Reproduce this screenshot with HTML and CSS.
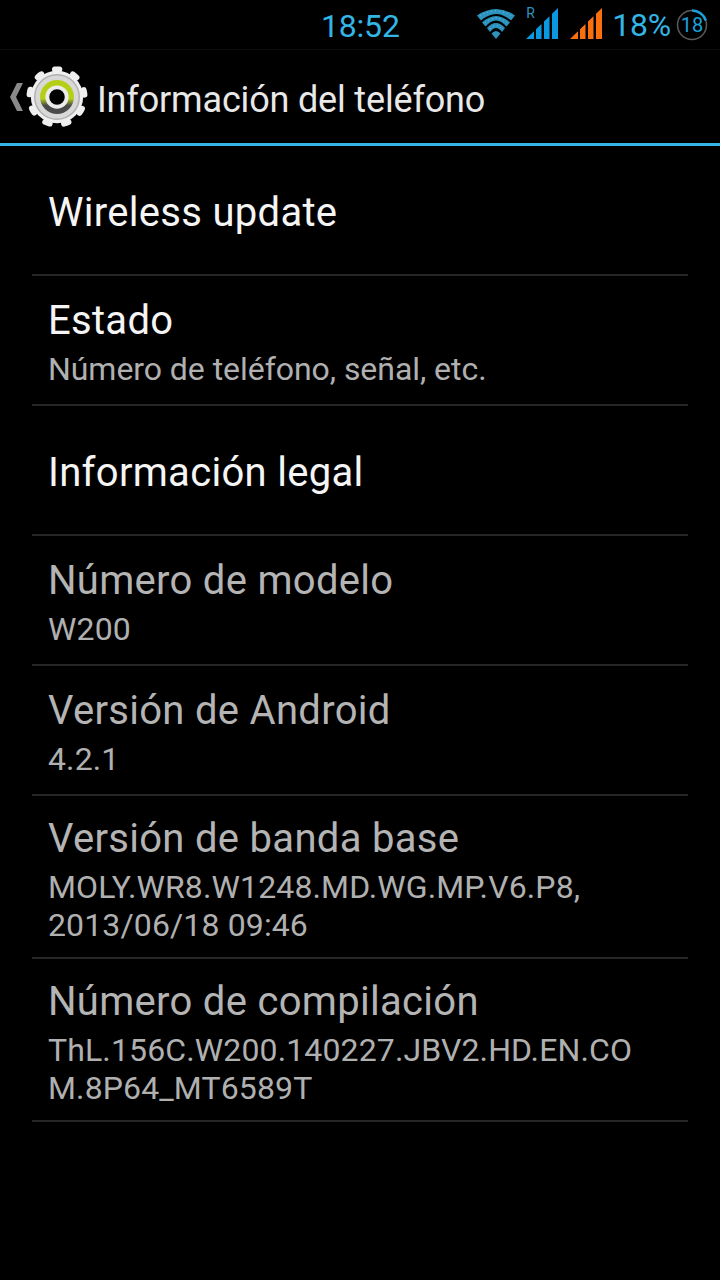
FILE: index.html
```html
<!DOCTYPE html>
<html>
<head>
    <title>Información del teléfono</title>
    <link rel="stylesheet" href="styles.css">
</head>
<body>
    <div class="status-bar">
        <span class="clock">18:52</span>
        <div class="status-icons">
            <!-- wifi -->
            <svg class="wifi" width="40" height="32" viewBox="0 0 40 32">
                <path d="M1 7.500Q20 -5.500 39 7.500L35 12.500Q20 -0.500 5 12.500Z" fill="#2b93bd"/>
                <path d="M6 14.500Q20 1.500 34 14.500L30.500 18.500Q20 6.500 9.500 18.500Z" fill="#2b93bd"/>
                <path d="M11 20Q20 10 29 20L26 24Q20 16 14 24Z" fill="#2b93bd"/>
                <path d="M15.500 25.500Q20 20.500 24.500 25.500L20 31Z" fill="#2b93bd"/>
                <path d="M4 8Q20 -2 36 8M9 15Q20 5 31 15M14 21Q20 14 26 21" fill="none" stroke="#7cc0da" stroke-width="1" stroke-dasharray="1 3"/>
            </svg>
            <div class="signal-wrap">
                <span class="roam">R</span>
                <svg class="signal" width="32" height="32" viewBox="0 0 32 32">
                    <path d="M0 31 8 23.200V31ZM10 31V21.300L15.500 16V31ZM18 31V13.500L23.500 8.200V31ZM26 31V5.800L32 0V31Z" fill="#0a99e0"/>
                </svg>
            </div>
            <svg class="signal second" width="32" height="32" viewBox="0 0 32 32">
                <path d="M0 31 8 23.200V31ZM10 31V21.300L15.500 16V31ZM18 31V13.500L23.500 8.200V31ZM26 31V5.800L32 0V31Z" fill="#fb6f0f"/>
            </svg>
            <span class="percent">18%</span>
            <svg class="battery" width="32" height="32" viewBox="0 0 32 32">
                <circle cx="16" cy="16" r="14.500" fill="none" stroke="#5a5a5a" stroke-width="1.500"/>
                <path d="M16 1.500A14.500 14.500 0 0 1 29.800 11.500" fill="none" stroke="#1ba0dc" stroke-width="2.500"/>
                <text x="16" y="23" text-anchor="middle" class="battery-num">18</text>
            </svg>
        </div>
    </div>

    <div class="action-bar">
        <svg class="back" width="14" height="30" viewBox="0 0 14 30">
            <path d="M8 1h6L7 15l7 14H8L1 15Z" fill="#8a8a8a"/>
        </svg>
        <svg class="gear" width="62" height="62" viewBox="0 0 64 64">
            <defs>
                <linearGradient id="ring" x1="0" y1="0" x2="0" y2="1">
                    <stop offset="0.55" stop-color="#b5cf16"/>
                    <stop offset="0.75" stop-color="#4a4a4a"/>
                </linearGradient>
            </defs>
            <circle cx="32" cy="32" r="27" fill="#efefef"/>
            <circle cx="32" cy="32" r="28.500" fill="none" stroke="#efefef" stroke-width="6" stroke-dasharray="5 14.900" stroke-dashoffset="2.500" stroke-linecap="round" transform="rotate(-90 32 32)"/>
            <circle cx="32" cy="32" r="23" fill="#d8d8d8" stroke="#b0b0b0" stroke-width="1.500"/>
            <circle cx="32" cy="32" r="17.500" fill="url(#ring)"/>
            <circle cx="32" cy="32" r="12" fill="#ececec"/>
            <circle cx="32" cy="32" r="8" fill="#000"/>
        </svg>
        <span class="screen-title">Información del teléfono</span>
    </div>

    <div class="list">
        <div class="row single">
            <div class="row-title">Wireless update</div>
        </div>
        <div class="row">
            <div class="row-title">Estado</div>
            <div class="row-sub tight">Número de teléfono, señal, etc.</div>
        </div>
        <div class="row single">
            <div class="row-title">Información legal</div>
        </div>
        <div class="row disabled">
            <div class="row-title">Número de modelo</div>
            <div class="row-sub">W200</div>
        </div>
        <div class="row disabled">
            <div class="row-title">Versión de Android</div>
            <div class="row-sub">4.2.1</div>
        </div>
        <div class="row disabled tall">
            <div class="row-title">Versión de banda base</div>
            <div class="row-sub">MOLY.WR8.W1248.MD.WG.MP.V6.P8,<br>2013/06/18 09:46</div>
        </div>
        <div class="row disabled tall">
            <div class="row-title">Número de compilación</div>
            <div class="row-sub">ThL.156C.W200.140227.JBV2.HD.EN.CO<br>M.8P64_MT6589T</div>
        </div>
    </div>
</body>
</html>
```

FILE: styles.css
```css
body {
    margin: 0;
    background: #000;
    font-family: Roboto, sans-serif;
    color: #fff;
}

.status-bar {
    height: 50px;
    position: relative;
    background: #000;
    border-bottom: 1px solid #0c0c0c;
    box-sizing: border-box;
    display: flex;
    align-items: center;
    justify-content: flex-end;
    padding-right: 12px;
}
.clock {
    position: absolute;
    left: 321px;
    top: 8px;
    font-size: 32px;
    line-height: 36px;
    letter-spacing: -0.2px;
    color: #33b5e5;
}
.status-icons {
    display: flex;
    align-items: center;
}
.wifi {
    margin-right: 10px;
    margin-top: -1px;
}
.signal-wrap {
    position: relative;
    display: flex;
}
.roam {
    position: absolute;
    left: 0;
    top: -4px;
    font-size: 14px;
    color: #2b93bd;
}
.signal {
    margin-top: -1px;
}
.signal.second {
    margin-left: 12px;
}
.percent {
    font-size: 32px;
    letter-spacing: -0.2px;
    color: #33b5e5;
    margin-left: 10px;
    margin-right: 5px;
}
.battery-num {
    font-family: Roboto, sans-serif;
    font-size: 20px;
    fill: #1ba0dc;
}

.action-bar {
    height: 93px;
    display: flex;
    align-items: center;
    border-bottom: 3px solid #33b5e5;
    padding-left: 9px;
}
.back {
    margin-right: 3px;
}
.gear {
    margin-right: 9px;
}
.screen-title {
    font-size: 36px;
    letter-spacing: -0.17px;
    color: #e8e8e8;
    margin-top: 6px;
}

.list {
    padding: 0 32px;
}
.row {
    box-sizing: border-box;
    height: 130px;
    padding: 21px 17px 0;
    border-bottom: 2px solid #262626;
}
.row.single {
    padding-top: 43px;
}
.row.tall {
    height: 163px;
    padding-top: 19px;
}
.row-title {
    font-size: 40px;
    line-height: 48px;
    letter-spacing: 0.3px;
    margin-left: -1px;
    color: #f5f5f5;
}
.row-sub {
    font-size: 32px;
    line-height: 38px;
    letter-spacing: 0.13px;
    margin-top: 5px;
    margin-left: -1px;
    color: #b0b0b0;
}
.row-sub.tight {
    letter-spacing: -0.05px;
}
.disabled .row-title {
    color: #b4b4b4;
}
```
